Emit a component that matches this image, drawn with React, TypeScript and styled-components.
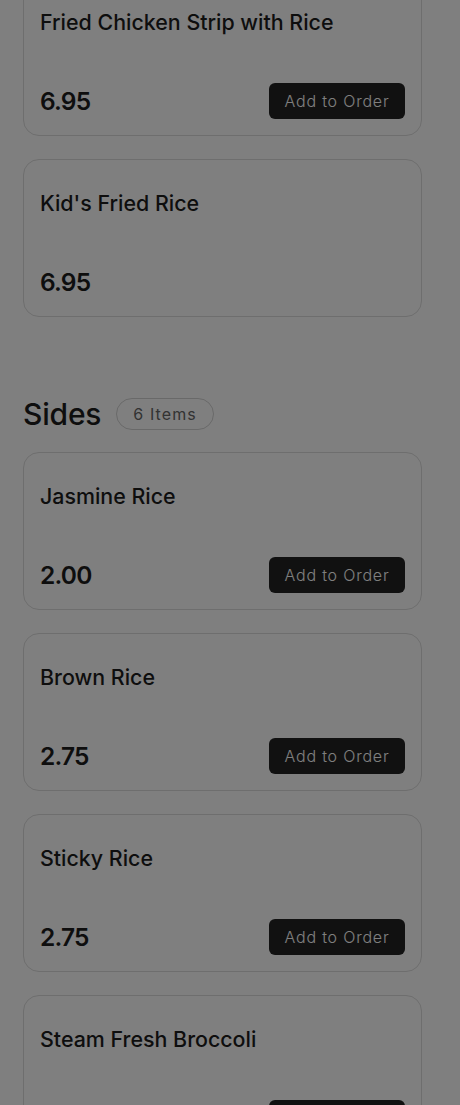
import styled, { createGlobalStyle } from "styled-components";

interface MenuItem {
  name: string;
  price: string;
  orderable: boolean;
}

interface MenuSection {
  title?: string;
  count?: number;
  items: MenuItem[];
}

const sections: MenuSection[] = [
  {
    items: [
      { name: "Fried Chicken Strip with Rice", price: "6.95", orderable: true },
      { name: "Kid's Fried Rice", price: "6.95", orderable: false },
    ],
  },
  {
    title: "Sides",
    count: 6,
    items: [
      { name: "Jasmine Rice", price: "2.00", orderable: true },
      { name: "Brown Rice", price: "2.75", orderable: true },
      { name: "Sticky Rice", price: "2.75", orderable: true },
      { name: "Steam Fresh Broccoli", price: "3.50", orderable: true },
    ],
  },
];

const GlobalStyle = createGlobalStyle`
  html, body {
    margin: 0;
    padding: 0;
    background: #ffffff;
    overflow: hidden;
  }
  body {
    font-family: Inter, "Noto Sans", sans-serif;
    color: #1c1c1c;
  }
`;

const Page = styled.main`
  width: 445px;
  box-sizing: border-box;
  padding: 0 23px;
  margin-top: -22px;
  display: flex;
  flex-direction: column;
`;

const Section = styled.section<{ $spaced: boolean }>`
  display: flex;
  flex-direction: column;
  gap: 23px;
  margin-top: ${({ $spaced }) => ($spaced ? "81px" : "0")};
`;

const SectionHeader = styled.header`
  display: flex;
  align-items: center;
  gap: 15px;
  height: 32px;
  margin-bottom: -1px;
`;

const SectionTitle = styled.h2`
  margin: 0;
  font-size: 30px;
  font-weight: 500;
  line-height: 32px;
  letter-spacing: -0.2px;
`;

const CountBadge = styled.span`
  display: inline-flex;
  align-items: center;
  height: 32px;
  box-sizing: border-box;
  padding: 0 16px;
  border: 1px solid #d2d2d2;
  border-radius: 999px;
  font-size: 16px;
  font-weight: 400;
  letter-spacing: 1.1px;
  color: #666666;
`;

const Card = styled.article`
  height: 158px;
  box-sizing: border-box;
  padding: 29px 16px 16px;
  border: 1px solid #dcdcdc;
  border-radius: 16px;
  display: flex;
  flex-direction: column;
  justify-content: space-between;
`;

const ItemName = styled.h3`
  margin: 0;
  font-size: 21.4px;
  font-weight: 500;
  line-height: 28px;
`;

const PriceRow = styled.div`
  display: flex;
  align-items: center;
  justify-content: space-between;
  height: 36px;
`;

const Price = styled.span`
  font-size: 24.5px;
  font-weight: 600;
  letter-spacing: -0.8px;
`;

const AddButton = styled.button`
  width: 136px;
  height: 36px;
  border: none;
  border-radius: 6px;
  background: #222222;
  color: #ffffff;
  font-family: inherit;
  font-size: 16px;
  font-weight: 300;
  letter-spacing: 0.8px;
  cursor: pointer;
`;

const Backdrop = styled.div`
  position: fixed;
  inset: 0;
  background: rgba(0, 0, 0, 0.5);
`;

export default function App() {
  return (
    <>
      <GlobalStyle />
      <Page>
        {sections.map((section, i) => (
          <Section key={i} $spaced={i > 0}>
            {section.title && (
              <SectionHeader>
                <SectionTitle>{section.title}</SectionTitle>
                <CountBadge>{section.count} Items</CountBadge>
              </SectionHeader>
            )}
            {section.items.map((item) => (
              <Card key={item.name}>
                <ItemName>{item.name}</ItemName>
                <PriceRow>
                  <Price>{item.price}</Price>
                  {item.orderable && <AddButton>Add to Order</AddButton>}
                </PriceRow>
              </Card>
            ))}
          </Section>
        ))}
      </Page>
      <Backdrop />
    </>
  );
}
